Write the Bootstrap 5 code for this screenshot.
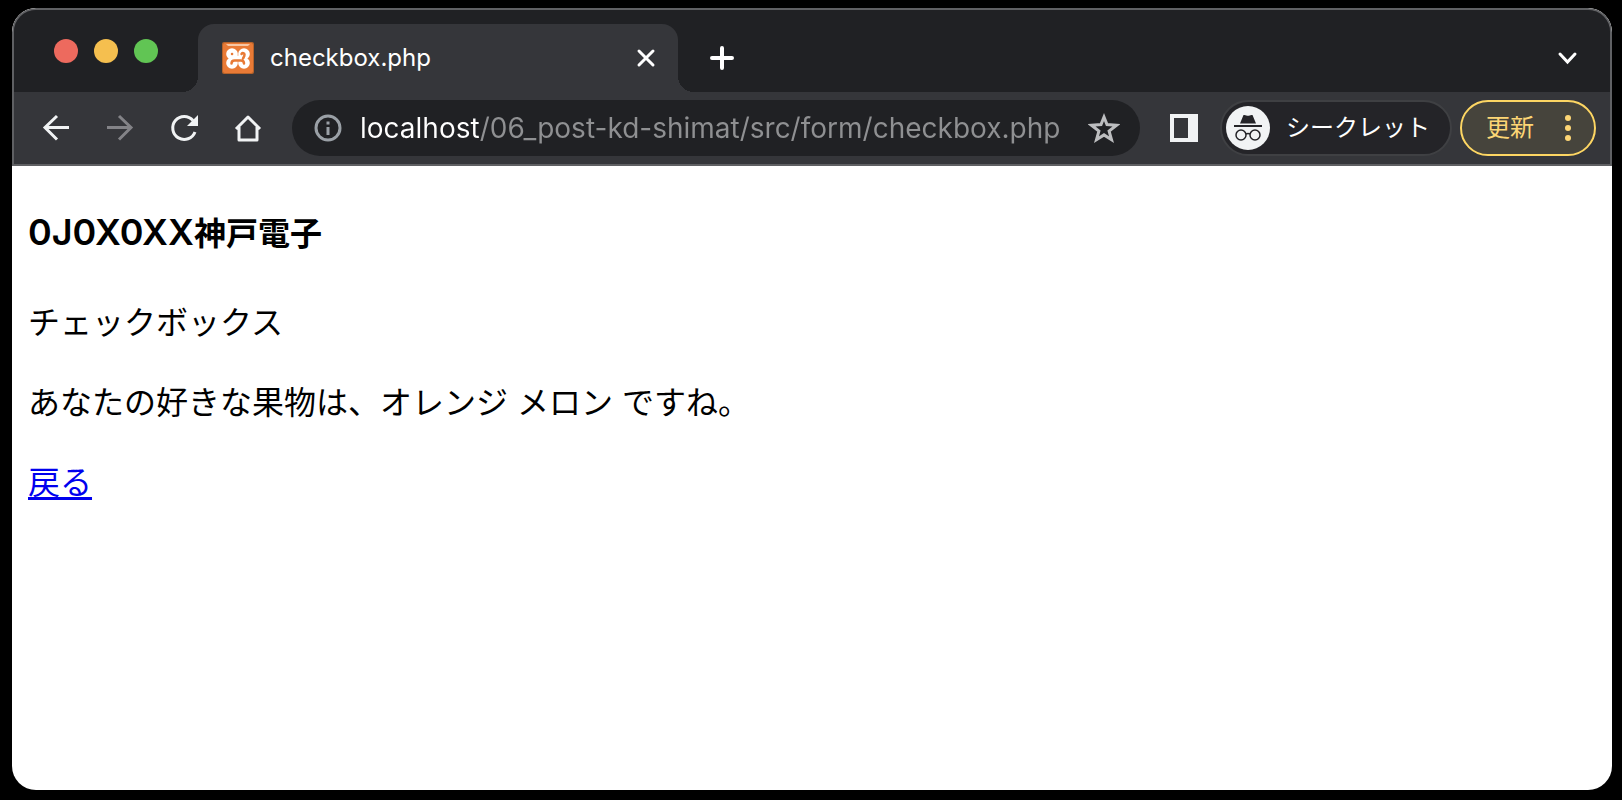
<!DOCTYPE html>
<html lang="ja">
<head>
<meta charset="utf-8">
<meta name="viewport" content="width=device-width, initial-scale=1">
<title>checkbox.php</title>
<link href="https://cdn.jsdelivr.net/npm/bootstrap@5.3.0/dist/css/bootstrap.min.css" rel="stylesheet">
<style>
  body { background: #000; font-family: "Inter", "Noto Sans CJK JP", sans-serif; }
  svg { display: block; flex: none; }
  button { font-family: inherit; }
  .desktop { padding: 8px 10px 10px 12px; }
  .browser { border-radius: 24px; background: #fff; }
  .chrome { border: 2px solid #5f6063; border-radius: 24px 24px 0 0; background: #35363a; }
  .tab-strip { height: 82px; padding-top: 14px; background: #202124; }
  .lights { width: 184px; padding: 15px 0 0 40px; gap: 16px; }
  .light { width: 24px; height: 24px; border-radius: 50%; }
  .light-close { background: #ed6a5e; }
  .light-min { background: #f5bf4f; }
  .light-max { background: #61c554; }
  .tab-item { width: 480px; height: 68px; padding: 0 22px 0 24px; background: #35363a; border-radius: 16px 16px 0 0; }
  .tab-item::before, .tab-item::after { content: ""; position: absolute; bottom: 0; width: 16px; height: 16px; }
  .tab-item::before { right: 100%; background: radial-gradient(circle at 0 0, transparent 16px, #35363a 16px); }
  .tab-item::after { left: 100%; background: radial-gradient(circle at 100% 0, transparent 16px, #35363a 16px); }
  .tab-title { font-size: 24px; line-height: 32px; color: #fff; }
  .plain { padding: 0; border: 0; background: none; color: #f1f3f4; }
  .new-tab { margin-left: 32px; }
  .tab-search { margin-right: 32px; }
  .toolbar { height: 72px; padding: 0 14px 0 26px; }
  .nav-buttons { gap: 32px; margin-right: 28px; }
  .nav-buttons .off { color: #838387; }
  .omnibox { height: 56px; padding: 0 20px; border-radius: 28px; background: #202124; color: #9aa0a6; }
  .url-input { min-width: 0; height: 40px; padding: 0; margin: 0 16px; border: 0; outline: 0; font-size: 28px; line-height: 40px;
    color: #8f9092; background: linear-gradient(90deg, #fff 120px, #8f9092 120px); -webkit-background-clip: text; background-clip: text; -webkit-text-fill-color: transparent; }
  .side-panel { margin: 0 22px 0 30px; }
  .incognito { height: 56px; padding: 0 20px 0 4px; border: 2px solid #3f4043; border-radius: 28px; background: #242428; color: #fff; font-size: 24px; line-height: 32px; gap: 16px; }
  .update { height: 56px; width: 136px; margin-left: 8px; padding: 0 22px 0 24px; border: 2px solid #fdd663; border-radius: 28px; background: #46443c; color: #fdd675; font-size: 24px; line-height: 32px; }
  .page-body { min-height: 624px; padding: 42px 16px; color: #000; font-size: 32px; line-height: 48px; }
  .page-body h1 { font-size: 32px; line-height: 48px; font-weight: 600; margin: 0 0 41px; }
  .student-id { font-size: 36px; }
  .page-body p { margin: 0 0 32px; }
  .page-body a { color: #0000ee; text-decoration-thickness: 3px; text-underline-offset: 3px; }
</style>
</head>
<body>
<div class="desktop">
  <div class="browser overflow-hidden">
    <header class="chrome overflow-hidden">
      <div class="tab-strip d-flex">
        <div class="lights d-flex">
          <span class="light light-close"></span><span class="light light-min"></span><span class="light light-max"></span>
        </div>
        <div class="tab-item position-relative d-flex align-items-center">
          <svg width="32" height="32" viewBox="0 0 32 32" aria-hidden="true">
            <rect width="32" height="32" rx="2" fill="#b5622a"/>
            <rect x="1" y="1" width="30" height="30" rx="2" fill="#e87a36"/>
            <path d="M4 2h24l-2 2H6z" fill="#f6c7a5"/>
            <g fill="#fff"><circle cx="10" cy="12" r="5.800"/><circle cx="22" cy="12" r="5.800"/><circle cx="10" cy="21" r="5.800"/><circle cx="22" cy="21" r="5.800"/><path d="M8 13.500h16v6H8z"/></g>
            <g fill="none" stroke="#e87a36" stroke-width="2.500" stroke-linecap="round" stroke-linejoin="round"><path d="M10 12h.1M9.500 21.500c0-2 1-3 3-3H19c2 0 3 1 3 3M19.500 12c1-1.500 3-1 3 .5 0 2-1 3-1.500 4"/></g>
          </svg>
          <span class="tab-title ms-3 me-auto">checkbox.php</span>
          <button class="plain" type="button" aria-label="タブを閉じる">
            <svg width="20" height="20" viewBox="0 0 20 20" fill="none" stroke="#fff" stroke-width="3" stroke-linecap="round"><path d="M3 3l14 14M17 3L3 17"/></svg>
          </button>
        </div>
        <button class="plain new-tab" type="button" aria-label="新しいタブ">
          <svg width="24" height="24" viewBox="0 0 24 24" fill="none" stroke="#fff" stroke-width="4" stroke-linecap="round"><path d="M12 2v20M2 12h20"/></svg>
        </button>
        <button class="plain tab-search ms-auto" type="button" aria-label="タブを検索">
          <svg width="22" height="22" viewBox="0 0 22 22" fill="none" stroke="#fff" stroke-width="3" stroke-linecap="round"><path d="M4 7l7.500 8L19 7"/></svg>
        </button>
      </div>
      <div class="toolbar d-flex align-items-center">
        <div class="nav-buttons d-flex">
          <button class="plain" type="button" aria-label="戻る">
            <svg width="32" height="32" viewBox="0 0 32 32" fill="none" stroke="currentColor" stroke-width="3"><path d="M29 15.500H5M17 4L5 15.500 17 27.500"/></svg>
          </button>
          <button class="plain off" type="button" aria-label="進む">
            <svg width="32" height="32" viewBox="0 0 32 32" fill="none" stroke="currentColor" stroke-width="3"><path d="M3 15.500h24M15 4l12 11.500L15 27.500"/></svg>
          </button>
          <button class="plain" type="button" aria-label="再読み込み">
            <svg width="32" height="32" viewBox="0 0 32 32" fill="none" stroke="currentColor" stroke-width="3"><path d="M27 20A11.500 11.500 0 1 1 25 8.500"/><path d="M30 3v11H19z" fill="currentColor" stroke="none"/></svg>
          </button>
          <button class="plain" type="button" aria-label="ホーム">
            <svg width="32" height="32" viewBox="0 0 32 32" fill="none" stroke="currentColor" stroke-width="3"><path d="M4 17L16 5l12 12M7 15v13h18V15" stroke-linejoin="round"/></svg>
          </button>
        </div>
        <div class="omnibox d-flex align-items-center flex-grow-1">
          <svg width="32" height="32" viewBox="0 0 32 32" fill="none" stroke="currentColor" stroke-width="3"><circle cx="16" cy="16" r="12"/><path d="M16 9.500v3M16 15v8"/></svg>
          <input class="url-input flex-grow-1" type="text" aria-label="アドレス" value="localhost/06_post-kd-shimat/src/form/checkbox.php">
          <button class="plain" type="button" aria-label="ブックマーク">
            <svg width="32" height="32" viewBox="0 0 32 32" fill="none" stroke="#bdbec0" stroke-width="3"><path d="M16 5l3 7.600 9.500.7-7.400 5.800 2.400 8.600L16 22.900 8.500 27.700l2.400-8.600-7.400-5.800 9.500-.7z"/></svg>
          </button>
        </div>
        <button class="plain side-panel" type="button" aria-label="サイドパネル">
          <svg width="28" height="28" viewBox="0 0 28 28" fill="#f1f3f4"><path fill-rule="evenodd" d="M0 0h28v28H0zM4 4v20h14V4z"/></svg>
        </button>
        <button class="incognito d-flex align-items-center flex-shrink-0" type="button">
          <svg width="44" height="44" viewBox="0 0 44 44"><circle cx="22" cy="22" r="22" fill="#f1f3f4"/><path d="M14 17.500L17.500 9c2-.5 3 .8 4.500.8S24.500 8.500 26.500 9L30 17.500z" fill="#242428"/><path d="M8 20h28" stroke="#242428" stroke-width="2"/><g fill="none" stroke="#242428" stroke-width="1.500"><circle cx="15" cy="29" r="5"/><circle cx="29" cy="29" r="5"/><path d="M20 28q2-1 4 0"/></g></svg>
          <span>シークレット</span>
        </button>
        <button class="update d-flex align-items-center justify-content-between flex-shrink-0" type="button">
          <span>更新</span>
          <svg width="8" height="28" viewBox="0 0 8 28" fill="currentColor"><circle cx="4" cy="4" r="3"/><circle cx="4" cy="14" r="3"/><circle cx="4" cy="24" r="3"/></svg>
        </button>
      </div>
    </header>
    <main class="page-body">
      <h1><span class="student-id">0J0X0XX</span>神戸電子</h1>
      <p>チェックボックス</p>
      <p>あなたの好きな果物は、オレンジ メロン ですね。</p>
      <a href="#">戻る</a>
    </main>
  </div>
</div>
<script src="https://cdn.jsdelivr.net/npm/bootstrap@5.3.0/dist/js/bootstrap.bundle.min.js"></script>
</body>
</html>
